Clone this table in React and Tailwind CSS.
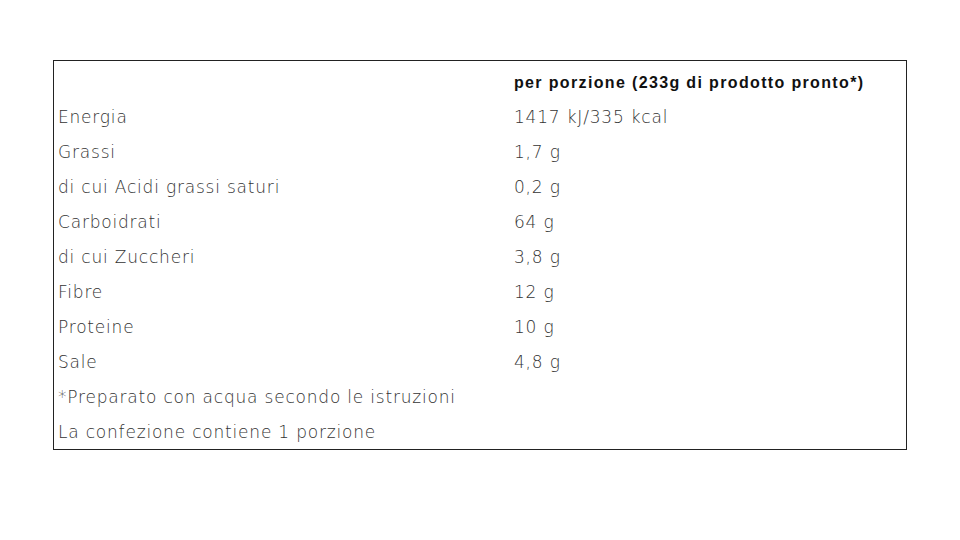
const rows = [
	['Energia', '1417 kJ/335 kcal'],
	['Grassi', '1,7 g'],
	['di cui Acidi grassi saturi', '0,2 g'],
	['Carboidrati', '64 g'],
	['di cui Zuccheri', '3,8 g'],
	['Fibre', '12 g'],
	['Proteine', '10 g'],
	['Sale', '4,8 g'],
	['*Preparato con acqua secondo le istruzioni', ''],
	['La confezione contiene 1 porzione', '']
];

export default function App() {
	return (
		<div className="h-[540px] w-[960px] bg-white pl-[53px] pt-[60px]">
			<div className="w-[854px] border border-[#222] pt-[3px] font-['DejaVu_Sans',sans-serif] text-[17px] font-extralight tracking-[0.8px] text-[#333]">
				<div className="grid h-[35px] grid-cols-[460px_1fr] items-center pt-[2px]">
					<div />
					<div className="font-['Liberation_Sans',Arial,sans-serif] text-[16px] font-bold tracking-[1.35px] text-[#111]">
						per porzione (233g di prodotto pronto*)
					</div>
				</div>
				{rows.map(([label, value]) => (
					<div key={label} className="grid h-[35px] grid-cols-[460px_1fr] items-center pt-[3px]">
						<div className="whitespace-nowrap pl-[4px]">{label}</div>
						<div>{value}</div>
					</div>
				))}
			</div>
		</div>
	);
}
